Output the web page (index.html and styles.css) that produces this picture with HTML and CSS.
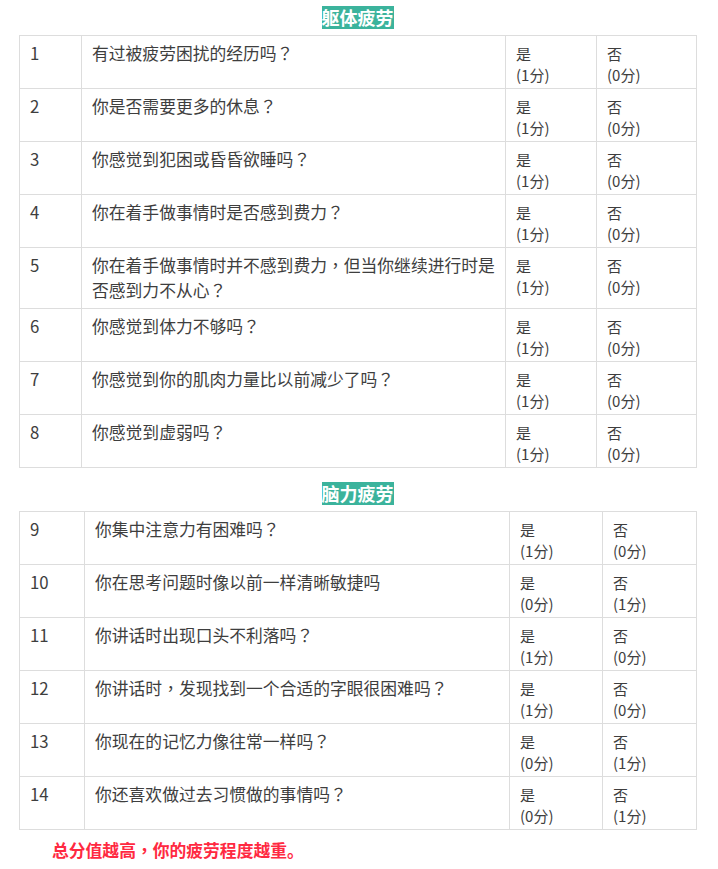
FILE: index.html
```html
<!DOCTYPE html>
<html lang="zh-CN">
<head>
<meta charset="utf-8">
<title>疲劳量表</title>
<link rel="stylesheet" href="styles.css">
</head>
<body>
<div class="page">
  <div class="title first"><span class="badge">躯体疲劳</span></div>
  <table class="scale scale-a">
    <colgroup><col class="c1"><col class="c2"><col class="c3"><col class="c4"></colgroup>
    <tbody>
      <tr><td class="num">1</td><td class="q">有过被疲劳困扰的经历吗<span class="pm" lang="zh-TW">？</span></td><td class="opt">是<br>(1分)</td><td class="opt">否<br>(0分)</td></tr>
      <tr><td class="num">2</td><td class="q">你是否需要更多的休息<span class="pm" lang="zh-TW">？</span></td><td class="opt">是<br>(1分)</td><td class="opt">否<br>(0分)</td></tr>
      <tr><td class="num">3</td><td class="q">你感觉到犯困或昏昏欲睡吗<span class="pm" lang="zh-TW">？</span></td><td class="opt">是<br>(1分)</td><td class="opt">否<br>(0分)</td></tr>
      <tr><td class="num">4</td><td class="q">你在着手做事情时是否感到费力<span class="pm" lang="zh-TW">？</span></td><td class="opt">是<br>(1分)</td><td class="opt">否<br>(0分)</td></tr>
      <tr><td class="num">5</td><td class="q">你在着手做事情时并不感到费力<span class="pm" lang="zh-TW">，</span>但当你继续进行时是否感到力不从心<span class="pm" lang="zh-TW">？</span></td><td class="opt">是<br>(1分)</td><td class="opt">否<br>(0分)</td></tr>
      <tr><td class="num">6</td><td class="q">你感觉到体力不够吗<span class="pm" lang="zh-TW">？</span></td><td class="opt">是<br>(1分)</td><td class="opt">否<br>(0分)</td></tr>
      <tr><td class="num">7</td><td class="q">你感觉到你的肌肉力量比以前减少了吗<span class="pm" lang="zh-TW">？</span></td><td class="opt">是<br>(1分)</td><td class="opt">否<br>(0分)</td></tr>
      <tr><td class="num">8</td><td class="q">你感觉到虚弱吗<span class="pm" lang="zh-TW">？</span></td><td class="opt">是<br>(1分)</td><td class="opt">否<br>(0分)</td></tr>
    </tbody>
  </table>

  <div class="title second"><span class="badge">脑力疲劳</span></div>
  <table class="scale scale-b">
    <colgroup><col class="c1"><col class="c2"><col class="c3"><col class="c4"></colgroup>
    <tbody>
      <tr><td class="num">9</td><td class="q">你集中注意力有困难吗<span class="pm" lang="zh-TW">？</span></td><td class="opt">是<br>(1分)</td><td class="opt">否<br>(0分)</td></tr>
      <tr><td class="num">10</td><td class="q">你在思考问题时像以前一样清晰敏捷吗</td><td class="opt">是<br>(0分)</td><td class="opt">否<br>(1分)</td></tr>
      <tr><td class="num">11</td><td class="q">你讲话时出现口头不利落吗<span class="pm" lang="zh-TW">？</span></td><td class="opt">是<br>(1分)</td><td class="opt">否<br>(0分)</td></tr>
      <tr><td class="num">12</td><td class="q">你讲话时<span class="pm" lang="zh-TW">，</span>发现找到一个合适的字眼很困难吗<span class="pm" lang="zh-TW">？</span></td><td class="opt">是<br>(1分)</td><td class="opt">否<br>(0分)</td></tr>
      <tr><td class="num">13</td><td class="q">你现在的记忆力像往常一样吗<span class="pm" lang="zh-TW">？</span></td><td class="opt">是<br>(0分)</td><td class="opt">否<br>(1分)</td></tr>
      <tr><td class="num">14</td><td class="q">你还喜欢做过去习惯做的事情吗<span class="pm" lang="zh-TW">？</span></td><td class="opt">是<br>(0分)</td><td class="opt">否<br>(1分)</td></tr>
    </tbody>
  </table>

  <p class="note">总分值越高<span class="pm" lang="zh-TW">，</span>你的疲劳程度越重。</p>
</div>
</body>
</html>
```

FILE: styles.css
```css
html, body {
  margin: 0;
  padding: 0;
  background: #fff;
}

body {
  font-family: "Noto Sans CJK SC", "Noto Sans", sans-serif;
  color: #3e3e3e;
}

.page {
  width: 677px;
  margin-left: 19px;
  padding-top: 6px;
}

.title {
  text-align: center;
  height: 23px;
  line-height: 23px;
  margin-bottom: 6px;
}

.title.second {
  margin-top: 14px;
}

.badge {
  display: inline-block;
  height: 23px;
  line-height: 23px;
  font-size: 18px;
  font-weight: bold;
  color: #fff;
  background: #3bb39c;
  vertical-align: top;
}

.scale {
  width: 677px;
  border-collapse: collapse;
  table-layout: fixed;
}

.scale-a .c1 { width: 62px; }
.scale-a .c2 { width: 424px; }
.scale-a .c3 { width: 91px; }
.scale-a .c4 { width: 100px; }

.scale-b .c1 { width: 65px; }
.scale-b .c2 { width: 425px; }
.scale-b .c3 { width: 93px; }
.scale-b .c4 { width: 94px; }

.scale td {
  border: 1px solid #ddd;
  padding: 5px 10px;
  vertical-align: top;
  word-break: break-all;
}

.num,
.q {
  font-size: 16.8px;
  line-height: 25px;
}

.pm {
  font-family: "Noto Sans CJK TC", "Noto Sans CJK SC", sans-serif;
}

.scale td.opt {
  font-size: 15px;
  line-height: 21px;
  padding: 7px 10px 3px;
}

.note {
  margin: 8px 0 0 0;
  padding-left: 33px;
  font-size: 16.8px;
  line-height: 25px;
  font-weight: bold;
  color: #ff2941;
}
```
